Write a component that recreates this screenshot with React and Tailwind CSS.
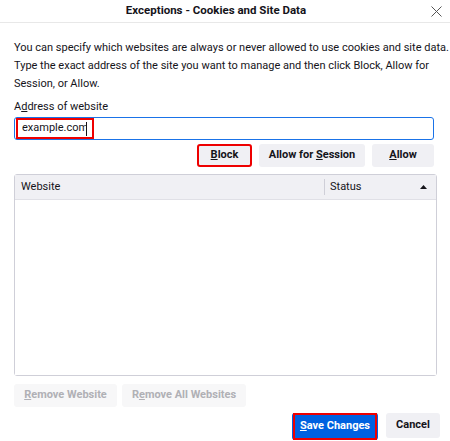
import React, { useState } from "react";

const font = { fontFamily: 'Roboto, "Noto Sans", sans-serif' };

function Btn({ children, className = "" }) {
  return (
    <button
      className={`flex h-[23px] items-center justify-center whitespace-nowrap rounded-[3px] bg-[#f0f0f4] text-[11px] font-bold text-[#15141a] ${className}`}
    >
      {children}
    </button>
  );
}

export default function App() {
  const [site, setSite] = useState("example.com");

  return (
    <div className="flex h-[441px] w-[450px] flex-col overflow-hidden bg-white text-[#15141a]" style={font}>
      {/* title bar */}
      <div className="relative flex h-[23px] shrink-0 items-center justify-center border-b border-[#e8e8e8] pr-[18px]">
        <span className="text-[11.5px] font-bold">Exceptions - Cookies and Site Data</span>
        <button className="absolute right-[6px] top-[3px] flex h-[16px] w-[16px] items-center justify-center text-[#555]">
          <svg width="11" height="11" viewBox="0 0 11 11" fill="none" stroke="currentColor" strokeWidth="1">
            <path d="M0.5 0.5L10.5 10.5M10.5 0.5L0.5 10.5" />
          </svg>
        </button>
      </div>

      <div className="flex flex-1 flex-col px-[14px]">
        <p className="mt-[16px] whitespace-nowrap text-[11px] leading-[18px]">
          You can specify which websites are always or never allowed to use cookies and site data.
          <br />
          Type the exact address of the site you want to manage and then click Block, Allow for
          <br />
          Session, or Allow.
        </p>

        <label className="mt-[5px] text-[11px] leading-[18px]">
          A<span className="underline">d</span>dress of website
        </label>

        <div className="mt-[1px] flex h-[23px] w-[420px] items-center rounded-[3px] border border-[#1a73e8] pl-[1px]">
          <div className="flex h-[21px] w-[78px] items-center border-2 border-[#ee0000] pl-[4px]">
            <input
              value={site}
              onChange={(e) => setSite(e.target.value)}
              className="w-[64px] bg-transparent p-0 text-[11px] outline-none"
            />
            <span className="h-[14px] w-px bg-[#15141a]" />
          </div>
        </div>

        {/* action buttons */}
        <div className="mt-[4px] flex justify-end gap-[7px] pr-[2px]">
          <Btn className="w-[55px] border-2 border-[#ee0000]">
            <span className="underline">B</span>lock
          </Btn>
          <Btn className="w-[106px]">
            Allow for&nbsp;<span className="underline">S</span>ession
          </Btn>
          <Btn className="w-[62px]">
            <span className="underline">A</span>llow
          </Btn>
        </div>

        {/* site list */}
        <div className="mt-[7px] flex h-[202px] w-[423px] flex-col rounded-[3px] border border-[#cfcfd8]">
          <div className="flex h-[25px] shrink-0 items-center border-b border-[#e0e0e6] bg-[#f0f0f4] text-[11px]">
            <div className="flex-1 pl-[6px]">Website</div>
            <div className="h-[16px] w-px bg-[#cfcfd8]" />
            <div className="flex w-[111px] items-center justify-between pl-[5px] pr-[9px]">
              <span>Status</span>
              <svg width="7" height="4" viewBox="0 0 7 4">
                <path d="M0 4L3.5 0L7 4Z" fill="#15141a" />
              </svg>
            </div>
          </div>
          <div className="flex-1 bg-white" />
        </div>

        {/* remove buttons */}
        <div className="mt-[8px] flex gap-[5px]">
          <button className="h-[23px] w-[103px] whitespace-nowrap rounded-[3px] bg-[#f7f7f8] text-[11px] font-bold text-[#b0b0b5]">
            <span className="underline">R</span>emove Website
          </button>
          <button className="h-[23px] w-[124px] whitespace-nowrap rounded-[3px] bg-[#f7f7f8] text-[11px] font-bold text-[#b0b0b5]">
            R<span className="underline">e</span>move All Websites
          </button>
        </div>

        {/* dialog buttons */}
        <div className="mt-[6px] flex justify-end gap-[8px]">
          <button className="flex h-[27px] w-[86px] items-center justify-center rounded-[3px] bg-[#0061e0] text-[11px] font-bold text-white">
            <span className="flex h-[27px] w-[84px] items-center justify-center whitespace-nowrap border-2 border-[#ee0000]">
              <span className="underline">S</span>ave Changes
            </span>
          </button>
          <button className="-mr-[4px] h-[25px] w-[54px] rounded-[3px] bg-[#f0f0f4] text-[11px] font-bold">
            Cancel
          </button>
        </div>
      </div>
    </div>
  );
}
